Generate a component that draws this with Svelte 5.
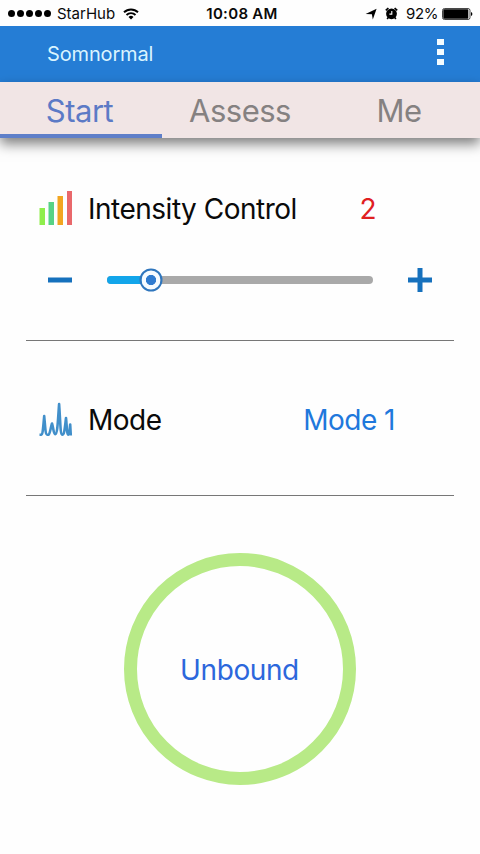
<script>
  const tabs = ["Start", "Assess", "Me"];
  const minLevel = 0;
  const maxLevel = 12;

  let activeTab = $state("Start");
  let level = $state(2);
  let percent = $derived(((level - minLevel) / (maxLevel - minLevel)) * 100);

  function changeLevel(step) {
    level = Math.min(maxLevel, Math.max(minLevel, level + step));
  }
</script>

<div class="screen">
  <div class="status-bar">
    <div class="status-left">
      <div class="signal">
        {#each Array(5) as _}
          <span class="signal-dot"></span>
        {/each}
      </div>
      <span class="carrier">StarHub</span>
      <svg class="wifi" width="16" height="12" viewBox="0 0 16 12">
        <path d="M1 4.3a10 10 0 0 1 14 0" />
        <path d="M3.5 7a6.4 6.4 0 0 1 9 0" />
        <path class="solid" d="M8 11.4 5.5 8.9a3.6 3.6 0 0 1 5 0z" />
      </svg>
    </div>
    <span class="clock">10:08 AM</span>
    <div class="status-right">
      <svg class="location" width="12" height="12" viewBox="0 0 12 12">
        <path d="M11.6.8 7.8 11.6 6.9 6.3.6 6z" />
      </svg>
      <svg class="alarm" width="13" height="13" viewBox="0 0 13 13">
        <circle cx="6.5" cy="6.8" r="5.4" />
        <path class="bell" d="M.8 3.4 3.4 1M12.2 3.4 9.6 1M3.2 10.6 2.2 12M9.8 10.6l1 1.4" />
        <path class="hands" d="M6.8 4v3.1H4.4" />
      </svg>
      <span class="charge">92%</span>
      <svg class="battery" width="31" height="12" viewBox="0 0 31 12">
        <rect class="case" x="0.5" y="0.5" width="27.5" height="11" rx="2" />
        <rect x="1.3" y="1.3" width="25" height="9.4" rx="0.8" />
        <path d="M29 4v4q1.4-.6 1.4-2T29 4z" />
      </svg>
    </div>
  </div>

  <header class="app-bar">
    <h1>Somnormal</h1>
    <button class="menu" aria-label="Menu">
      <span></span>
      <span></span>
      <span></span>
    </button>
  </header>

  <nav class="tabs">
    {#each tabs as tab}
      <button
        class="tab"
        class:active={tab === activeTab}
        onclick={() => (activeTab = tab)}>{tab}</button
      >
    {/each}
  </nav>

  <main>
    <section class="intensity">
      <div class="row">
        <svg class="row-icon" width="34" height="34" viewBox="0 0 34 34">
          <rect x="0.5" y="17" width="5.5" height="17" fill="#8fee4c" />
          <rect x="9.5" y="11" width="5.5" height="23" fill="#57d286" />
          <rect x="18.5" y="5" width="5.5" height="29" fill="#f2a520" />
          <rect x="28" y="0" width="5" height="34" fill="#e9686b" />
        </svg>
        <span class="label">Intensity Control</span>
        <span class="level">{level}</span>
      </div>

      <div class="slider-row">
        <button class="step" aria-label="Decrease" onclick={() => changeLevel(-1)}>
          <svg width="24" height="24" viewBox="0 0 24 24">
            <path d="M0 12h24" />
          </svg>
        </button>
        <div class="track">
          <div class="fill" style="width: {percent}%"></div>
          <div class="thumb" style="left: {percent}%"></div>
        </div>
        <button class="step" aria-label="Increase" onclick={() => changeLevel(1)}>
          <svg width="24" height="24" viewBox="0 0 24 24">
            <path d="M0 12h24M12 0v24" />
          </svg>
        </button>
      </div>
    </section>

    <section class="mode">
      <div class="row">
        <svg class="row-icon" width="34" height="34" viewBox="0 0 34 34">
          <path
            class="wave"
            d="M.5 32.7H2.2C3.8 32.4 4.1 26 5.2 14 6.3 26 6.500 32.700 8.200 32.700H9.500C11 32 11.500 26 13 21.500 14.500 26 14.500 32 16.200 32.200 18.500 32 18.800 20 20.100 2 21.400 20 21.300 32.500 23.200 32.700 25.500 32.700 25.800 26 27 16 28 26 28 32.700 29.300 32.700S30.600 28 31.200 22.500L31.800 33.500"
          />
        </svg>
        <span class="label">Mode</span>
        <span class="mode-name">Mode 1</span>
      </div>
    </section>

    <button class="bind-ring">Unbound</button>
  </main>
</div>

<style>
  :global(body) {
    margin: 0;
    background: #fefefe;
  }

  .screen {
    width: 480px;
    height: 854px;
    overflow: hidden;
    background: #fefefe;
    font-family: Inter, "Liberation Sans", sans-serif;
    color: #0a0a0a;
  }

  button {
    border: 0;
    padding: 0;
    background: none;
    font: inherit;
    color: inherit;
    cursor: pointer;
  }

  .status-bar {
    display: grid;
    grid-template-columns: 1fr auto 1fr;
    align-items: center;
    height: 26px;
    padding: 0 7px 0 8px;
    box-sizing: border-box;
    font-size: 15px;
    line-height: 26px;
  }

  .status-bar > span,
  .carrier,
  .charge {
    padding-top: 1px;
  }

  .status-left,
  .status-right {
    display: flex;
    align-items: center;
  }

  .status-right {
    justify-content: flex-end;
  }

  .signal {
    display: flex;
    gap: 2px;
    margin-right: 6px;
  }

  .signal-dot {
    width: 7px;
    height: 7px;
    border-radius: 50%;
    background: #000;
  }

  .wifi {
    margin-left: 8px;
    fill: none;
    stroke: #000;
    stroke-width: 1.9;
  }

  .wifi .solid {
    fill: #000;
    stroke: none;
  }

  .clock {
    margin-left: 3px;
    font-weight: 600;
    letter-spacing: 0.3px;
  }

  .alarm {
    margin: 0 8px 0 8px;
  }

  .alarm .bell {
    fill: none;
    stroke: #000;
    stroke-width: 1.7;
  }

  .alarm .hands {
    fill: none;
    stroke: #fff;
    stroke-width: 1.1;
  }

  .charge {
    margin-right: 4px;
    letter-spacing: -0.4px;
  }

  .battery .case {
    fill: none;
    stroke: #333;
    stroke-width: 0.9;
  }

  .app-bar {
    display: flex;
    align-items: center;
    justify-content: space-between;
    height: 56px;
    padding: 0 36px 0 47px;
    box-sizing: border-box;
    background: #257dd5;
  }

  h1 {
    margin: 0;
    font-size: 20px;
    font-weight: 400;
    letter-spacing: -0.15px;
    line-height: 56px;
    color: #d9f4ff;
  }

  .menu {
    display: flex;
    flex-direction: column;
    gap: 4px;
    margin-bottom: 4px;
  }

  .menu span {
    width: 7px;
    height: 6px;
    background: #f4fcff;
  }

  .tabs {
    position: relative;
    display: flex;
    height: 56px;
    background: #f1e5e5;
    box-shadow: 0 6px 12px rgba(0, 0, 0, 0.5);
  }

  .tab {
    flex: 1;
    padding: 4px 3px 0 0;
    border-bottom: 4px solid transparent;
    font-size: 31px;
    letter-spacing: -0.5px;
    color: #858181;
  }

  .tab.active {
    flex: 0 0 162px;
    box-sizing: border-box;
    border-bottom-color: #5f7fc9;
    color: #5c7ac6;
  }

  main {
    padding: 0 26px;
  }

  section {
    box-sizing: border-box;
    border-bottom: 1px solid #777;
  }

  .intensity {
    height: 203px;
    padding-top: 53px;
  }

  .mode {
    height: 155px;
    padding-top: 61px;
  }

  .row {
    display: flex;
    align-items: center;
    height: 34px;
    padding: 0 59px 0 13px;
    font-size: 28px;
    letter-spacing: -0.5px;
    line-height: 34px;
  }

  .row-icon {
    flex: none;
    margin-right: 15px;
  }

  .row span {
    padding-top: 2px;
  }

  .label {
    flex: 1;
  }

  .level {
    margin-right: 19px;
    color: #e0201f;
  }

  .mode-name {
    color: #1f78dc;
  }

  .wave {
    fill: none;
    stroke: #418fca;
    stroke-width: 2.6;
    stroke-linejoin: round;
  }

  .slider-row {
    display: flex;
    align-items: center;
    justify-content: space-between;
    margin-top: 43px;
    padding: 0 22px;
  }

  .step {
    height: 24px;
  }

  .step svg {
    display: block;
    stroke: #1671bd;
    stroke-width: 5;
  }

  .track {
    position: relative;
    width: 266px;
    height: 8px;
    border-radius: 4px;
    background: #a9a9a9;
  }

  .fill {
    height: 100%;
    border-radius: 4px;
    background: #12a5ea;
  }

  .thumb {
    position: absolute;
    top: 50%;
    width: 23px;
    height: 23px;
    box-sizing: border-box;
    border: 2.5px solid #2f76bd;
    border-radius: 50%;
    background: radial-gradient(circle, #2f7bd0 4.8px, #f6fbff 5.4px);
    transform: translate(-50%, -50%);
  }

  .bind-ring {
    display: block;
    width: 232px;
    height: 232px;
    margin: 57px auto 0;
    padding: 2px 1px 0 0;
    border: 13px solid #b8ea87;
    border-radius: 50%;
    font-size: 28px;
    letter-spacing: -0.4px;
    color: #2c67dc;
  }
</style>
